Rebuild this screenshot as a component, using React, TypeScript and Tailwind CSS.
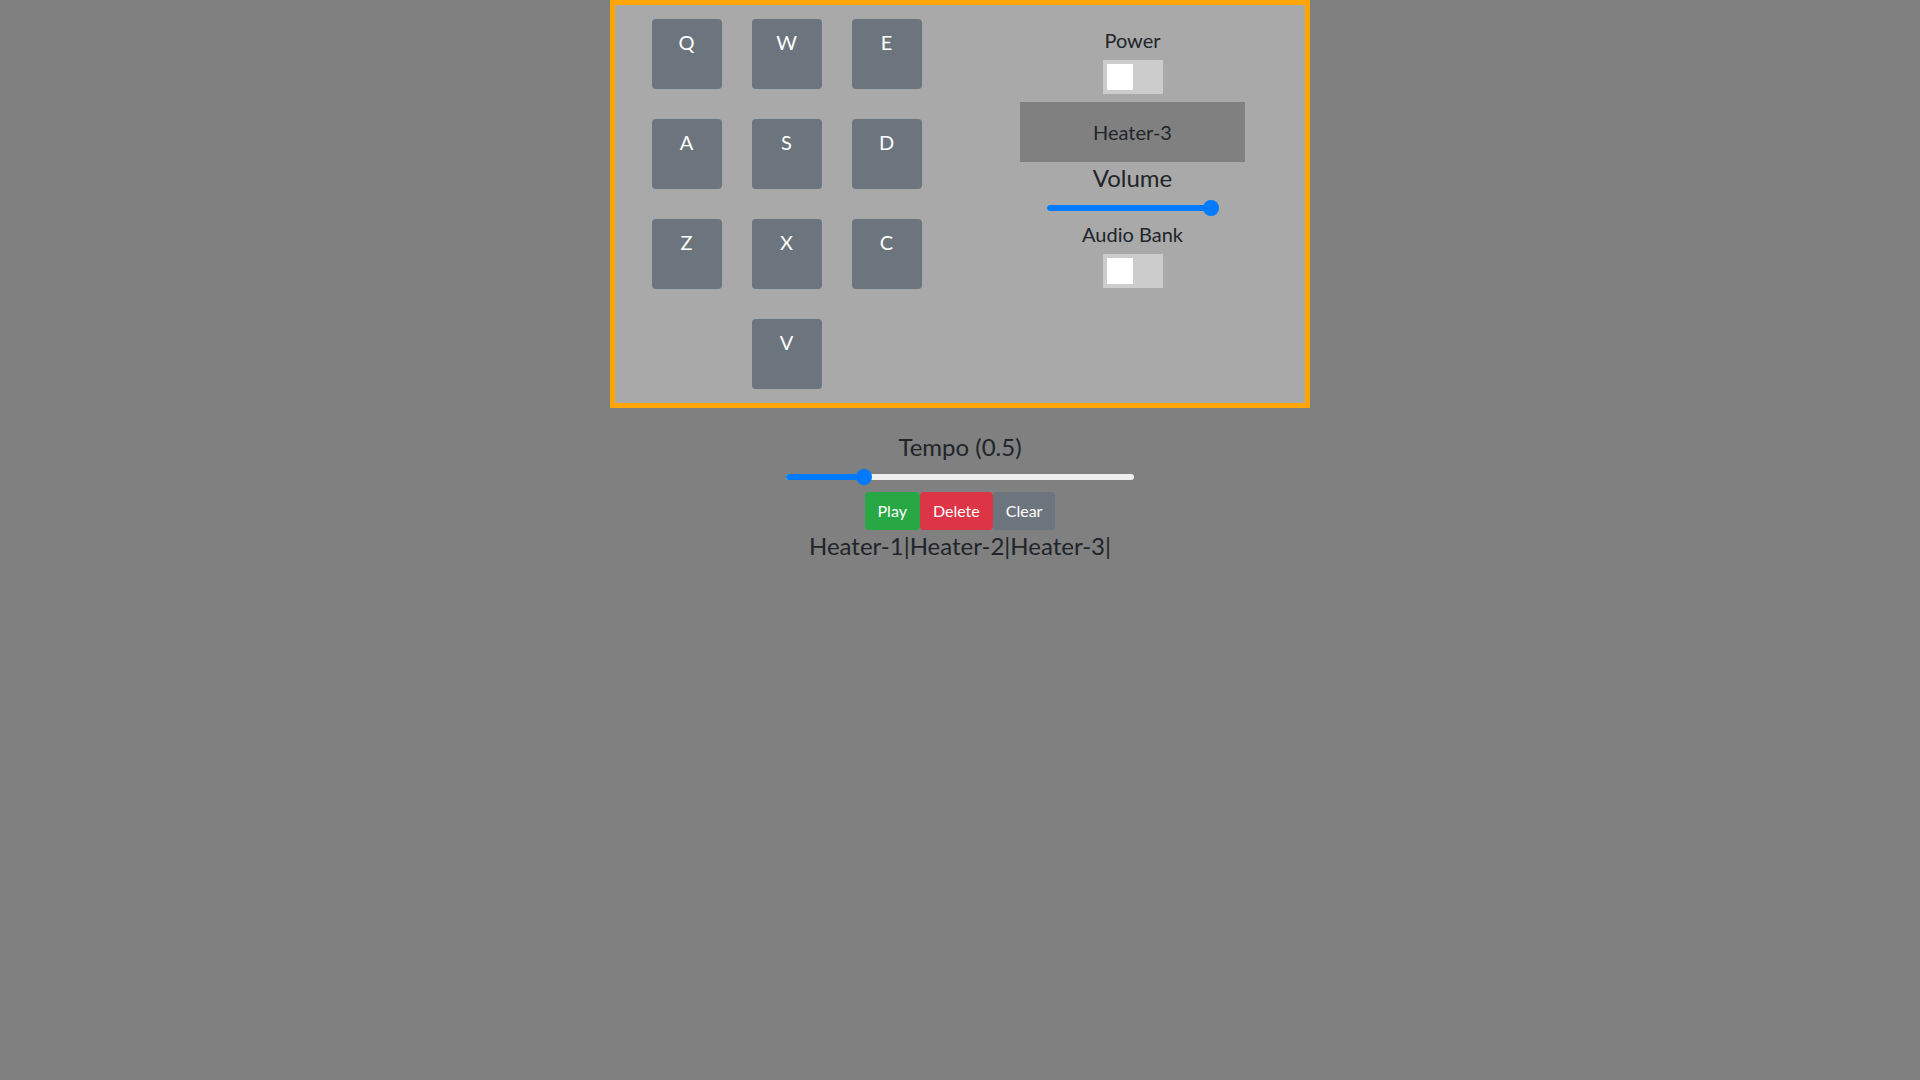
import { useState } from 'react'

const pads = ['Q', 'W', 'E', 'A', 'S', 'D', 'Z', 'X', 'C']

function Toggle() {
  return (
    <div className="mx-auto h-[34px] w-[60px] bg-[#cccccc] relative">
      <div className="absolute left-[4px] top-[4px] h-[26px] w-[26px] bg-white" />
    </div>
  )
}

function Slider({ width, pct, track }: { width: number; pct: number; track: string }) {
  return (
    <div className="relative mx-auto h-[16px]" style={{ width }}>
      <div className={`absolute left-0 right-0 top-[5px] h-[6px] rounded-full ${track}`} />
      <div
        className="absolute left-0 top-[5px] h-[6px] rounded-full bg-[#007bff]"
        style={{ width: `${pct}%` }}
      />
      <div
        className="absolute top-0 h-[16px] w-[16px] -translate-x-1/2 rounded-full bg-[#007bff]"
        style={{ left: `calc(8px + (100% - 16px) * ${pct / 100})` }}
      />
    </div>
  )
}

function Pad({ k }: { k: string }) {
  return (
    <div className="h-[70px] w-[70px] cursor-pointer rounded-[4px] bg-[#6c757d] pt-[11px] text-center text-[20px] leading-[24px] text-white">
      {k}
    </div>
  )
}

function App() {
  const [sequence] = useState(['Heater-1', 'Heater-2', 'Heater-3'])

  return (
    <div
      className="min-h-screen bg-[#808080] text-[#212529]"
      style={{ fontFamily: 'Lato, "Noto Sans", sans-serif' }}
    >
      <div className="mx-auto flex h-[408px] w-[700px] border-[5px] border-[#ffa500] bg-[#a9a9a9]">
        <div className="flex w-1/2 justify-center pt-[14px] pr-[2px]">
          <div className="grid h-fit grid-cols-[70px_70px_70px] gap-[30px]">
            {pads.map((k) => (
              <Pad key={k} k={k} />
            ))}
            <div />
            <Pad k="V" />
          </div>
        </div>

        <div className="flex w-1/2 flex-col items-center pt-[23px] text-center">
          <div className="text-[20px] leading-[24px]">Power</div>
          <div className="mt-[8px]">
            <Toggle />
          </div>
          <div className="mt-[8px] flex h-[60px] w-[225px] items-center justify-center bg-[#808080] text-[20px]">
            Heater-3
          </div>
          <div className="mt-[1px] text-[24px] leading-[29px]">Volume</div>
          <div className="mt-[8px]">
            <Slider width={172} pct={100} track="bg-[#efefef]" />
          </div>
          <div className="mt-[6px] text-[20px] leading-[24px]">Audio Bank</div>
          <div className="mt-[8px]">
            <Toggle />
          </div>
        </div>
      </div>

      <div className="flex flex-col items-center">
        <div className="mt-[24px] text-[24px] leading-[29px]">Tempo (0.5)</div>
        <div className="mt-[8px]">
          <Slider width={348} pct={21} track="bg-[#efefef]" />
        </div>
        <div className="mt-[7px] flex">
          <button className="h-[38px] rounded-[4px] bg-[#28a745] px-[13px] text-[16px] text-white">Play</button>
          <button className="h-[38px] rounded-[4px] bg-[#dc3545] px-[13px] text-[16px] text-white">Delete</button>
          <button className="h-[38px] rounded-[4px] bg-[#6c757d] px-[13px] text-[16px] text-white">Clear</button>
        </div>
        <div className="mt-[1px] text-[24px] leading-[29px]">
          {sequence.map((s) => s + '|').join('')}
        </div>
      </div>
    </div>
  )
}

export default App
